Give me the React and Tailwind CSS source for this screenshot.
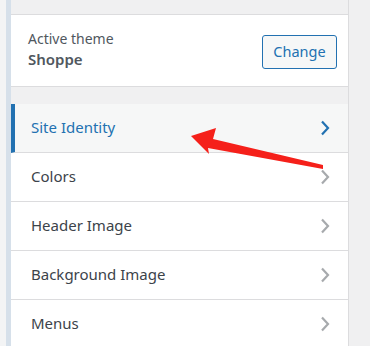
import React from "react";

const items = [
  { label: "Site Identity", active: true },
  { label: "Colors" },
  { label: "Header Image" },
  { label: "Background Image" },
  { label: "Menus" },
];

function Chevron({ active }) {
  return (
    <svg width="10" height="16" viewBox="0 0 10 16" fill="none">
      <path
        d="M2 1.5 L8 8 L2 14.5"
        stroke={active ? "#2271b1" : "#a7aaad"}
        strokeWidth="2.2"
      />
    </svg>
  );
}

export default function App() {
  return (
    <div
      className="relative flex w-[370px] h-[346px] overflow-hidden bg-[#f0f0f1]"
      style={{ fontFamily: '"Noto Sans", "Open Sans", sans-serif' }}
    >
      <div className="w-[6px] shrink-0 bg-[#f3f4f5]" />
      <div className="w-[5px] shrink-0 bg-[#d6e0ea]" />

      <div className="w-[338px] shrink-0 border-r border-[#dcdcde] flex flex-col">
        <div className="h-[14px] shrink-0" />
        <div className="h-[73px] shrink-0 bg-white border-y border-[#dcdcde] flex items-center justify-between pl-[17px] pr-[11px]">
          <div className="flex flex-col leading-[21px] mb-[4px]">
            <span className="text-[14px] text-[#50575e]">Active theme</span>
            <span className="text-[15px] font-semibold text-[#50575e]">Shoppe</span>
          </div>
          <button className="mt-[3px] w-[75px] h-[34px] rounded-[3px] border border-[#2271b1] bg-[#f6f7f7] text-[#2271b1] text-[14.5px]">
            Change
          </button>
        </div>
        <div className="h-[17px] shrink-0" />

        <ul className="flex flex-col shrink-0">
          {items.map((item) => (
            <li
              key={item.label}
              className={`h-[49px] shrink-0 flex items-center justify-between border-b border-[#dcdcde] pr-[18px] ${
                item.active
                  ? "bg-[#f6f7f7] border-l-4 border-l-[#2271b1] pl-[16px] text-[#2271b1]"
                  : "bg-white pl-[20px] text-[#3c434a]"
              }`}
            >
              <span className="text-[15px] mb-[2px]">{item.label}</span>
              <Chevron active={item.active} />
            </li>
          ))}
        </ul>
      </div>

      <svg
        className="absolute left-0 top-0 pointer-events-none"
        width="370"
        height="346"
        viewBox="0 0 370 346"
      >
        <polygon
          points="191,136 216,128 213,139 323,165 323,169 208,148 209,154"
          fill="#f5201a"
        />
      </svg>
    </div>
  );
}
